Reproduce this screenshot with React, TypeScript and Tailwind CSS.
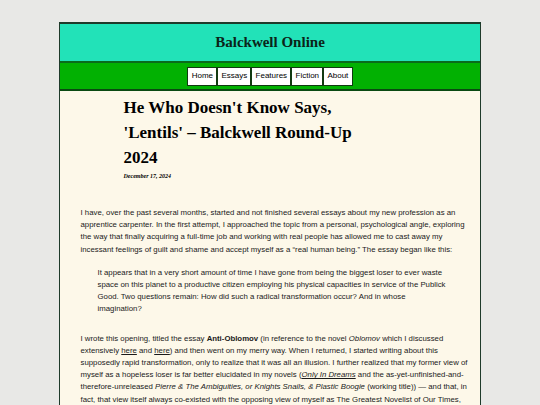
const navItems = ['Home', 'Essays', 'Features', 'Fiction', 'About']

const serif = "font-['Liberation_Serif','Times_New_Roman',serif]"
const sans = "font-['Liberation_Sans',Arial,sans-serif]"

function Header() {
  return (
    <>
      <div className="h-[39px] flex items-center justify-center bg-[#22e2b8] border-b-2 border-[#0a6b1c]">
        <h1 className={`${serif} text-[15px] font-bold text-[#0b2418]`}>Balckwell Online</h1>
      </div>
      <nav className="h-[28px] flex items-center justify-center bg-[#02b102] border-b-2 border-[#0a4a12]">
        <ul className="flex">
          {navItems.map((item) => (
            <li
              key={item}
              className={`${sans} h-[19px] px-[3.2px] flex items-center bg-white border-[1.5px] border-[#123a12] text-[8px] text-black`}
            >
              {item}
            </li>
          ))}
        </ul>
      </nav>
    </>
  )
}

export default function App() {
  return (
    <div className="h-[405px] overflow-hidden bg-[#e8e8e6] pt-[22px]">
      <div className="mx-auto w-[422px] border-x-[1.5px] border-t-2 border-[#1e3a2a] bg-[#fdf8e9]">
        <Header />
        <main className="pl-[20.5px] pr-[12px] pt-[4px] pb-6">
          <div className="pl-[43px] w-[300px]">
            <h2 className={`${serif} text-[17px] leading-[25px] font-bold text-black`}>
              He Who Doesn't Know Says, 'Lentils' – Balckwell Round-Up 2024
            </h2>
            <p className={`${serif} mt-[2px] text-[6px] italic font-bold text-black`}>December 17, 2024</p>
          </div>
          <div className={`${sans} mt-[26px] text-[7.8px] leading-[12.2px] text-[#1a1a1a]`}>
            <p>
              I have, over the past several months, started and not finished several essays about my new profession as an
              apprentice carpenter. In the first attempt, I approached the topic from a personal, psychological angle, exploring
              the way that finally acquiring a full-time job and working with real people has allowed me to cast away my
              incessant feelings of guilt and shame and accept myself as a “real human being.” The essay began like this:
            </p>
            <blockquote className="mt-[11px] ml-[17px] mr-[16px]">
              It appears that in a very short amount of time I have gone from being the biggest loser to ever waste
              space on this planet to a productive citizen employing his physical capacities in service of the Publick
              Good. Two questions remain: How did such a radical transformation occur? And in whose
              <br />
              imagination?
            </blockquote>
            <p className="mt-[17px]">
              I wrote this opening, titled the essay <b>Anti-Oblomov</b> (in reference to the novel <i>Oblomov</i> which I discussed
              extensively <u>here</u> and <u>here</u>) and then went on my merry way. When I returned, I started writing about this
              supposedly rapid transformation, only to realize that it was all an illusion. I further realized that my former view of
              myself as a hopeless loser is far better elucidated in my novels (<u><i>Only In Dreams</i></u> and the as-yet-unfinished-and-therefore-unreleased <i>Pierre &amp; The Ambiguities, or Knights Snails, &amp; Plastic Boogie</i> (working title)) — and that, in
              fact, that view itself always co-existed with the opposing view of myself as The Greatest Novelist of Our Times,
              and that both views were, in their way, equally true and equally false.
            </p>
          </div>
        </main>
      </div>
    </div>
  )
}
